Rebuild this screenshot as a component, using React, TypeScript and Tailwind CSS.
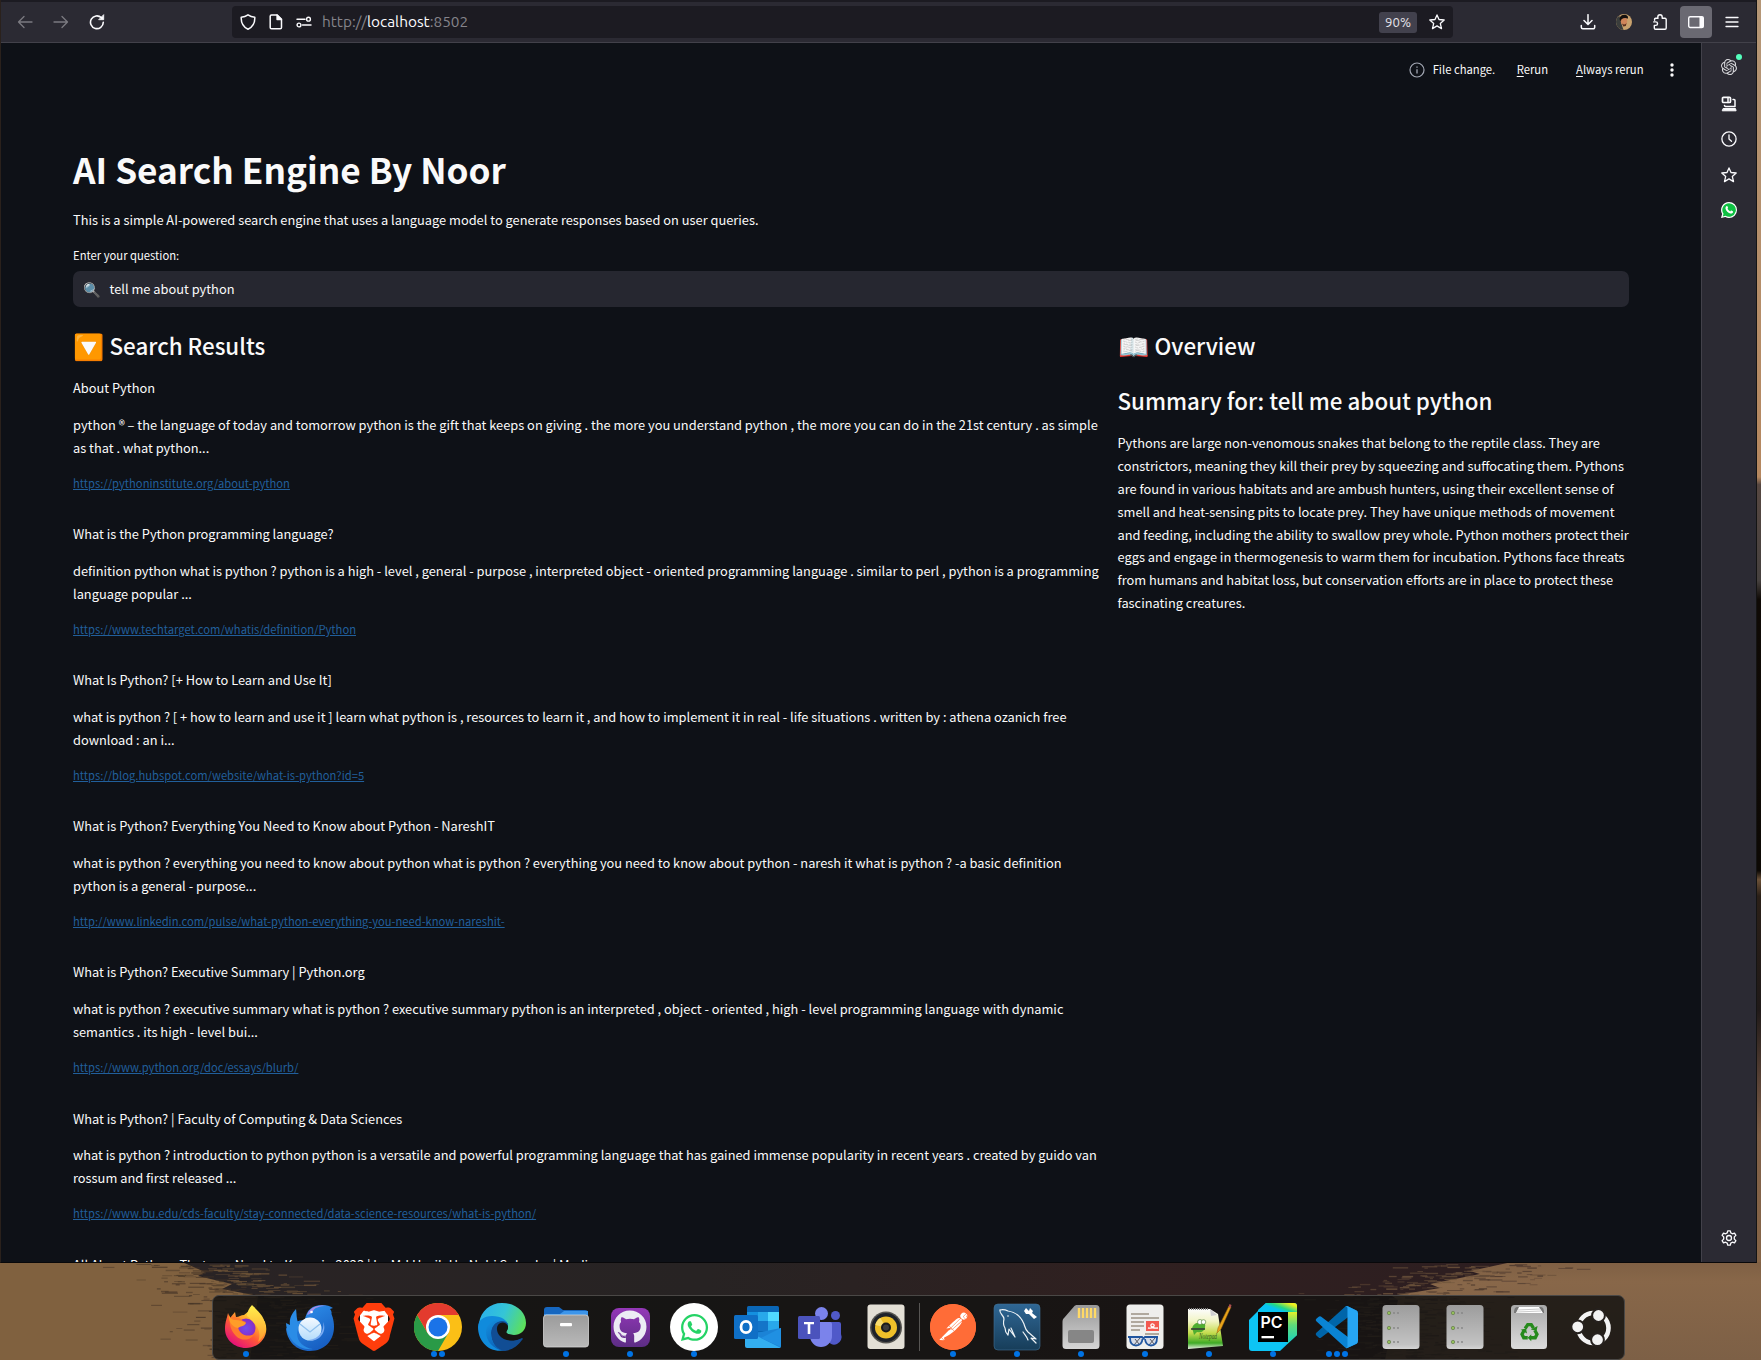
import React from "react";
import { FaGithub, FaWhatsapp } from "react-icons/fa";
import { SiBrave, SiOpenai, SiPostman } from "react-icons/si";

type Result = { title: string; body: [string, string]; url: string };

const results: Result[] = [
  {
    title: "About Python",
    body: [
      "python ® – the language of today and tomorrow python is the gift that keeps on giving . the more you understand python , the more you can do in the 21st century . as simple",
      "as that . what python...",
    ],
    url: "https://pythoninstitute.org/about-python",
  },
  {
    title: "What is the Python programming language?",
    body: [
      "definition python what is python ? python is a high - level , general - purpose , interpreted object - oriented programming language . similar to perl , python is a programming",
      "language popular ...",
    ],
    url: "https://www.techtarget.com/whatis/definition/Python",
  },
  {
    title: "What Is Python? [+ How to Learn and Use It]",
    body: [
      "what is python ? [ + how to learn and use it ] learn what python is , resources to learn it , and how to implement it in real - life situations . written by : athena ozanich free",
      "download : an i...",
    ],
    url: "https://blog.hubspot.com/website/what-is-python?id=5",
  },
  {
    title: "What is Python? Everything You Need to Know about Python - NareshIT",
    body: [
      "what is python ? everything you need to know about python what is python ? everything you need to know about python - naresh it what is python ? -a basic definition",
      "python is a general - purpose...",
    ],
    url: "http://www.linkedin.com/pulse/what-python-everything-you-need-know-nareshit-",
  },
  {
    title: "What is Python? Executive Summary | Python.org",
    body: [
      "what is python ? executive summary what is python ? executive summary python is an interpreted , object - oriented , high - level programming language with dynamic",
      "semantics . its high - level bui...",
    ],
    url: "https://www.python.org/doc/essays/blurb/",
  },
  {
    title: "What is Python? | Faculty of Computing & Data Sciences",
    body: [
      "what is python ? introduction to python python is a versatile and powerful programming language that has gained immense popularity in recent years . created by guido van",
      "rossum and first released ...",
    ],
    url: "https://www.bu.edu/cds-faculty/stay-connected/data-science-resources/what-is-python/",
  },
  {
    title: "All About Python: That you Need to Know in 2023 | by Md Hasib Un Nabi Soharba | Medium",
    body: ["", ""],
    url: "",
  },
];

const summary = [
  "Pythons are large non-venomous snakes that belong to the reptile class. They are",
  "constrictors, meaning they kill their prey by squeezing and suffocating them. Pythons",
  "are found in various habitats and are ambush hunters, using their excellent sense of",
  "smell and heat-sensing pits to locate prey. They have unique methods of movement",
  "and feeding, including the ability to swallow prey whole. Python mothers protect their",
  "eggs and engage in thermogenesis to warm them for incubation. Pythons face threats",
  "from humans and habitat loss, but conservation efforts are in place to protect these",
  "fascinating creatures.",
];

/* ---------- wallpaper ---------- */

function makeStreaks() {
  let seed = 11;
  const rnd = () => {
    seed = (seed * 16807) % 2147483647;
    return seed / 2147483647;
  };
  const out: { x: number; y: number; w: number; h: number; c: string; o: number }[] = [];
  for (let i = 0; i < 420; i++) {
    const y = 1264 + rnd() * 94;
    const edge = 192 + Math.min(y - 1264, 34) * 2.2;
    const d = (rnd() + rnd() + rnd() - 1.5) * 80;
    out.push({ x: edge + d, y, w: 3 + rnd() * 14, h: 0.6 + rnd() * 0.9, c: d < 0 ? "#463527" : "#725739", o: 0.4 + rnd() * 0.4 });
  }
  for (let i = 0; i < 420; i++) {
    const y = 1264 + rnd() * 94;
    const edge = 1500 - Math.min(y - 1264, 34) * 3;
    const d = (rnd() + rnd() + rnd() - 1.5) * 85;
    out.push({ x: edge + d, y, w: 3 + rnd() * 13, h: 0.6 + rnd() * 0.9, c: d > 0 ? "#4c382d" : "#70563d", o: 0.4 + rnd() * 0.4 });
  }
  return out;
}
const streaks = makeStreaks();

function Wallpaper() {
  return (
    <svg className="absolute inset-0" width="1761" height="1360" viewBox="0 0 1761 1360">
      <defs>
        <linearGradient id="wallMid" x1="0" x2="1">
          <stop offset="0" stopColor="#2a2325" />
          <stop offset="0.4" stopColor="#272323" />
          <stop offset="0.65" stopColor="#302020" />
          <stop offset="1" stopColor="#2a1c20" />
        </linearGradient>
        <linearGradient id="wallRight" x1="0" x2="0" y1="0" y2="1">
          <stop offset="0" stopColor="#b59777" />
          <stop offset="0.378" stopColor="#b5875f" />
          <stop offset="0.384" stopColor="#564741" />
          <stop offset="0.46" stopColor="#46413f" />
          <stop offset="0.475" stopColor="#0f0a06" />
          <stop offset="0.69" stopColor="#0d0905" />
          <stop offset="0.697" stopColor="#6b5138" />
          <stop offset="0.71" stopColor="#2b2018" />
          <stop offset="0.8" stopColor="#201a19" />
          <stop offset="0.86" stopColor="#5b4437" />
          <stop offset="0.9" stopColor="#7e5f47" />
          <stop offset="1" stopColor="#866547" />
        </linearGradient>
        <linearGradient id="wallBottom" x1="0" x2="0" y1="0" y2="1">
          <stop offset="0" stopColor="#7f6044" />
          <stop offset="0.2" stopColor="#886749" />
          <stop offset="1" stopColor="#7d6046" />
        </linearGradient>
      </defs>
      <rect width="1761" height="1360" fill="url(#wallMid)" />
      <path d="M0 1262H182L205 1272L198 1276L232 1284L222 1289L258 1296L250 1360H0z" fill="#80613f" />
      <path d="M1512 1262H1761V1360H1385L1398 1300L1392 1296L1440 1288L1430 1284L1480 1274L1470 1271z" fill="url(#wallBottom)" />
      {streaks.map((s, i) => (
        <rect key={i} x={s.x} y={s.y} width={s.w} height={s.h} fill={s.c} opacity={s.o} />
      ))}
      <rect x="1756" width="5" height="1262" fill="url(#wallRight)" />
    </svg>
  );
}

/* ---------- browser chrome icons ---------- */

function Icon({ children, className = "" }: { children: React.ReactNode; className?: string }) {
  return (
    <svg
      width="16"
      height="16"
      viewBox="0 0 16 16"
      fill="none"
      stroke="currentColor"
      strokeWidth="1.3"
      strokeLinecap="round"
      strokeLinejoin="round"
      className={"shrink-0 " + className}
    >
      {children}
    </svg>
  );
}

const Star = () => (
  <Icon>
    <path d="M8 .9l2 4.6 5.2.5-3.9 3.4 1.2 5.2L8 11.9l-4.500 2.700 1.200-5.200L.8 6l5.200-.5z" />
  </Icon>
);

const Gear = () => (
  <Icon>
    <circle cx="8" cy="8" r="2.5" />
    <path d="M6.7.8h2.6l.5 2.1 1.6.9 2.1-.7 1.4 2.3-1.6 1.5v2.2l1.6 1.5-1.4 2.3-2.1-.7-1.6.9-.5 2.1H6.7l-.5-2.1-1.6-.9-2.1.7-1.4-2.3 1.6-1.5V6.9L1.1 5.4l1.4-2.3 2.1.7 1.6-.9z" />
  </Icon>
);

const WhatsappBadge = () => (
  <svg width="16" height="16" viewBox="0 0 16 16" className="shrink-0">
    <path d="M8 0a8 8 0 0 1 0 16 8 8 0 0 1-3.7-.9L0 16l1.1-4A8 8 0 0 1 8 0z" fill="#fff" />
    <path d="M8 1.2a6.8 6.8 0 1 1-3.5 12.6L1.8 14.4l.7-2.6A6.8 6.8 0 0 1 8 1.2z" fill="#0fc043" />
    <path
      d="M5.4 4.2c.5-.4.9-.2 1.1.2l.6 1.3c.1.4-.5.8-.6 1.1.6 1.2 1.5 2 2.7 2.6.4-.1.8-.9 1.2-.8l1.4.7c.4.2.3.7.1 1.2-.4.9-1.6 1.3-2.7 1C6.9 10.8 5.3 9.2 4.6 7c-.3-1.1 0-2.2.8-2.8z"
      fill="#fff"
    />
  </svg>
);

function Toolbar() {
  return (
    <div className="flex h-[40px] shrink-0 items-center bg-[#2b2a33] text-[#fbfbfe]">
      <div className="flex w-[231px] items-center gap-5 pl-4">
        <Icon className="text-[#7b7a81]">
          <path d="M15 8H1.5M7 2.5L1.5 8 7 13.5" />
        </Icon>
        <Icon className="text-[#7b7a81]">
          <path d="M1 8h13.5M9 2.5L14.5 8 9 13.5" />
        </Icon>
        <Icon>
          <path d="M14.3 8.3A6.4 6.4 0 1 1 12.3 3.6" strokeWidth="1.6" />
          <path d="M14.7 1v4.7H10z" fill="currentColor" strokeWidth="0.8" />
        </Icon>
      </div>
      <div className="flex h-8 w-[1221px] items-center rounded-[4px] bg-[#1c1b22] pr-2 pl-2">
        <Icon>
          <path d="M8 .8c2 1.4 4.4 2.2 6.8 2.4.2 5-1.8 9.7-6.8 12C3 12.9 1 8.2 1.2 3.2 3.6 3 6 2.2 8 .8z" strokeWidth="1.5" />
        </Icon>
        <Icon className="ml-3">
          <path d="M3.5 1h5.7L13.5 5.3V13.5a1.3 1.3 0 0 1-1.3 1.3H3.5a1.3 1.3 0 0 1-1.3-1.3V2.3A1.3 1.3 0 0 1 3.5 1z" strokeWidth="1.5" />
          <path d="M9 1v4.5h4.5z" fill="currentColor" />
        </Icon>
        <Icon className="ml-3">
          <path d="M1 5.2h8M6.5 11H15" strokeWidth="1.5" />
          <circle cx="12.5" cy="5.2" r="1.9" strokeWidth="1.4" />
          <circle cx="3" cy="11" r="1.9" strokeWidth="1.4" />
        </Icon>
        <div className="ml-[10px] font-['Ubuntu','Noto_Sans',sans-serif] text-[15.4px] leading-8 whitespace-nowrap text-[#85848b]">
          http://<span className="text-[#fbfbfe]">localhost</span>:8502
        </div>
        <div className="mt-px ml-auto flex h-[21px] w-[38px] items-center justify-center rounded-[3px] bg-[#42414d] font-['Ubuntu','Noto_Sans',sans-serif] text-[13.2px] text-[#e4e3ea]">
          90%
        </div>
        <div className="ml-3">
          <Star />
        </div>
      </div>
      <div className="ml-auto flex items-center">
        <Icon>
          <path d="M8 .7v9.6M4 6.5l4 4 4-4M1.3 11.5v1.8a1.5 1.5 0 0 0 1.5 1.5h10.4a1.5 1.5 0 0 0 1.5-1.5v-1.8" strokeWidth="1.5" />
        </Icon>
        <svg width="16" height="16" viewBox="0 0 16 16" className="ml-5">
          <clipPath id="avatar">
            <circle cx="8" cy="8" r="8" />
          </clipPath>
          <g clipPath="url(#avatar)">
            <rect width="16" height="16" fill="#c9a26e" />
            <path d="M0 3l3.5-1 2 8 2 6H0z" fill="#3a3d3c" />
            <ellipse cx="8" cy="7" rx="3.2" ry="4.1" fill="#d0855a" />
            <path d="M3.5 5C4 1 7.5 0 10.5 1.2c1.6 1 1.8 2 1.2 3.5C10 3.5 7.5 3.8 5.5 5.2L4.7 7.5z" fill="#15100e" />
            <path d="M6 9.5c2 1.5 3.5 1 4.6-.5l-.8 3-2.5.5z" fill="#5b3020" />
          </g>
        </svg>
        <Icon className="ml-5">
          <path
            d="M5.8 4.3V3A2.2 2.2 0 0 1 10.2 3v1.3h2.8a1.2 1.2 0 0 1 1.2 1.2v8.5a1.2 1.2 0 0 1-1.2 1.2H3.5a1.2 1.2 0 0 1-1.2-1.2v-2.6h1.5a1.7 1.7 0 0 0 0-3.5H1.7"
            strokeWidth="1.4"
          />
          <path d="M5.8 4.3H3.6a1 1 0 0 0-1 1v.9" strokeWidth="1.4" />
        </Icon>
        <div className="ml-3 flex size-8 items-center justify-center rounded-[4px] bg-[#6a6972]">
          <Icon>
            <rect x="0.7" y="2.7" width="14.6" height="10.8" rx="1.5" strokeWidth="1.4" />
            <path d="M12 3h2.3a1 1 0 0 1 1 1v8.5a1 1 0 0 1-1 1H12z" fill="currentColor" strokeWidth="0.6" />
          </Icon>
        </div>
        <Icon className="mr-[16px] ml-3">
          <path d="M2 3.5h12M2 8h12M2 12.5h12" strokeWidth="1.3" />
        </Icon>
      </div>
    </div>
  );
}

function SideRail() {
  return (
    <div className="relative flex w-[55px] shrink-0 flex-col items-center border-l border-[#42414a] bg-[#2b2a33] pt-4 pr-px text-[#fbfbfe]">
      <SiOpenai size={16} className="text-[#d8d8dc]" />
      <span className="absolute top-[11px] left-[34px] size-[6px] rounded-full bg-[#54ffbd]" />
      <Icon className="mt-[21px]">
        <rect x="1.5" y="1.3" width="8" height="5.2" rx="1" strokeWidth="1.7" />
        <path d="M7 1.5v5M12 3.5h1a1 1 0 0 1 1 1v6H4.5a1.5 1.5 0 0 1-1-1" strokeWidth="1.5" />
        <path d="M2.5 12.5h12l.6 2.3H1.6z" fill="currentColor" strokeWidth="1" />
      </Icon>
      <Icon className="mt-[19px]">
        <circle cx="8" cy="8" r="7.1" />
        <path d="M8 3.8V8l2.5 2.3" />
      </Icon>
      <div className="mt-[20px]">
        <Star />
      </div>
      <div className="mt-[19px]">
        <WhatsappBadge />
      </div>
      <div className="mt-auto mb-[16px]">
        <Gear />
      </div>
    </div>
  );
}

/* ---------- page ---------- */

function SearchPage() {
  return (
    <main className="min-w-0 flex-1 overflow-hidden bg-[#0e1117] font-['Noto_Sans_CJK_SC',sans-serif] text-[12.83px] leading-[23.04px] whitespace-nowrap text-[#fafafa]">
      <div className="flex h-[54px] items-center justify-end pr-[27px] text-[11.25px]">
        <svg width="16" height="16" viewBox="0 0 16 16" fill="none" stroke="#a3a8b4" strokeWidth="1.2">
          <circle cx="8" cy="8" r="7" />
          <path d="M8 7.2V11.5M8 4.5v1.2" strokeWidth="1.3" />
        </svg>
        <span className="ml-2">File change.</span>
        <span className="ml-[21.5px]">
          <u className="underline-offset-2">R</u>erun
        </span>
        <span className="ml-[28px]">
          <u className="underline-offset-2">A</u>lways rerun
        </span>
        <svg width="4" height="14" viewBox="0 0 4 14" fill="#fafafa" className="ml-[26.5px]">
          <circle cx="2" cy="2" r="1.7" />
          <circle cx="2" cy="7" r="1.7" />
          <circle cx="2" cy="12" r="1.7" />
        </svg>
      </div>
      <div className="flex flex-col pr-[72px] pl-[72px]">
        <h1 className="mt-[47.5px] text-[35.2px] leading-[47.5px] font-bold">AI Search Engine By Noor</h1>
        <p className="mt-[16.4px]">
          This is a simple AI-powered search engine that uses a language model to generate responses based on user queries.
        </p>
        <p className="mt-[13px] text-[11.25px]">Enter your question:</p>
        <div className="mt-[4px] flex h-9 items-center rounded-[7px] bg-[#262730] pb-[2px] pl-[10px]">
          <span className="text-[14.4px]">🔍</span>
          <span className="ml-[8.5px]">tell me about python</span>
        </div>
        <div className="mt-[23px] flex">
          <section className="w-[1045px] shrink-0">
            <h2 className="flex text-[22.35px] leading-[30.2px] font-medium">
              <span className="w-[36.5px] text-[25.2px]">🔽</span>Search Results
            </h2>
            <div className="mt-[15.4px]">
              {results.map((r) => (
                <article key={r.title} className="h-[146.1px]">
                  <p>{r.title}</p>
                  <p className="mt-[13.8px]">
                    {r.body[0]}
                    <br />
                    {r.body[1]}
                  </p>
                  <a className="mt-[13px] block w-fit text-[11.21px] text-[#215f9b] underline">{r.url}</a>
                </article>
              ))}
            </div>
          </section>
          <section className="-ml-[0.5px]">
            <h2 className="flex text-[22.35px] leading-[30.2px] font-medium">
              <span className="w-[37px] text-[25.2px]">📖</span>Overview
            </h2>
            <h2 className="mt-[24px] text-[22.35px] leading-[30.2px] font-medium">Summary for: tell me about python</h2>
            <p className="mt-[17px] leading-[22.9px]">
              {summary.map((line) => (
                <React.Fragment key={line}>
                  {line}
                  <br />
                </React.Fragment>
              ))}
            </p>
          </section>
        </div>
      </div>
    </main>
  );
}

/* ---------- dock icons, each on a 48×48 grid ---------- */

function Svg48({ children }: { children: React.ReactNode }) {
  return (
    <svg width="48" height="48" viewBox="0 0 48 48">
      {children}
    </svg>
  );
}

const Firefox = () => (
  <Svg48>
    <defs>
      <linearGradient id="ff1" x1="0.85" y1="0.1" x2="0.25" y2="0.95">
        <stop offset="0" stopColor="#fff44f" />
        <stop offset="0.3" stopColor="#ffb52b" />
        <stop offset="0.6" stopColor="#ff5a36" />
        <stop offset="1" stopColor="#e4107a" />
      </linearGradient>
      <radialGradient id="ff2">
        <stop offset="0" stopColor="#6d4ff0" />
        <stop offset="1" stopColor="#8a2bc4" />
      </radialGradient>
      <linearGradient id="ff3" x1="0" y1="0" x2="0" y2="1">
        <stop offset="0" stopColor="#fff04d" />
        <stop offset="1" stopColor="#ff9a2e" />
      </linearGradient>
    </defs>
    <path d="M6 10l2 5 5-6 1 5c3 0 5-2 8-2l10-8c2 5 8 9 11 15 5 13-5 26-19 26C12 45 3 36 3 26 3 19 5 15 6 10z" fill="url(#ff1)" />
    <circle cx="24" cy="25" r="9.5" fill="url(#ff2)" />
    <path d="M30 2c4 4 8 8 10 11 6 10 3 21-4 26 3-8 1-14-4-19-4-4-5-6-7-7 0-4 2-8 5-11z" fill="url(#ff3)" />
    <path d="M8 15c4-2 9-1 13 3l3 1c-2 4-6 3-8 5 1 7 9 11 16 7-2 6-12 8-18 2-5-5-7-12-6-18z" fill="#ff7a2d" />
    <path d="M7 12c1 3 3 5 7 5 3 0 6 1 10 3-2 4-6 3-8 5-6-1-10-7-9-13z" fill="#ff9d28" />
  </Svg48>
);

const Thunderbird = () => (
  <Svg48>
    <defs>
      <linearGradient id="tb1" x1="0.2" y1="0" x2="0.8" y2="1">
        <stop offset="0" stopColor="#2f93ee" />
        <stop offset="1" stopColor="#1559bd" />
      </linearGradient>
      <linearGradient id="tb2" x1="0" y1="0" x2="0" y2="1">
        <stop offset="0" stopColor="#f4f9ff" />
        <stop offset="1" stopColor="#b3dcfb" />
      </linearGradient>
    </defs>
    <path d="M19 17C20 7 27 2 36 2c5 0 8 1 11 3l-3 1c1 1 2 3 1.5 5 2 5 2.5 9 2.5 13 0 13-9 24-24 24C10 48 1 38 0 25c1 1 3 1 4 0C6 20 12 17 19 17z" fill="url(#tb1)" />
    <path d="M21 12c2-7 10-11 20-9-8 0-13 2-14 5-1 2-3 3-6 4z" fill="#a58de8" />
    <path d="M0 20c1 16 12 28 27 26-9-1-16-7-16-16 0-3 1-5 3-8C10 18 11 12 10 6 5 11 3 17 4 22z" fill="#2a8ce6" />
    <circle cx="24" cy="26" r="11.5" fill="url(#tb2)" />
    <path d="M14 21l10 8 10-8" fill="none" stroke="#8fc0ee" strokeWidth="1.3" />
    <path d="M37 19c2 8-4 17-14 18 9 3 19-8 14-18z" fill="#79aaf2" />
    <circle cx="25.5" cy="9" r="1.3" fill="#fff" />
  </Svg48>
);

const Brave = () => (
  <div className="relative flex size-12 items-center justify-center text-[#ff3d0c]">
    <div className="absolute top-[7px] left-[10px] h-[32px] w-[28px] rounded-b-[14px] bg-white" />
    <SiBrave size={48} className="relative" />
  </div>
);

const Chrome = () => (
  <Svg48>
    <circle cx="24" cy="24" r="24" fill="#fbbf16" />
    <path d="M3.2 12A24 24 0 0 0 24 48L34.4 30 24 24 13.6 30z" fill="#2a9a47" />
    <path d="M3.2 12L13.6 30 24 12H44.8A24 24 0 0 0 3.2 12z" fill="#e33b2e" />
    <circle cx="24" cy="24" r="12" fill="#fff" />
    <circle cx="24" cy="24" r="9.5" fill="#1a73e8" />
  </Svg48>
);

const Edge = () => (
  <Svg48>
    <defs>
      <linearGradient id="ed1" x1="0" y1="0.3" x2="1" y2="0.6">
        <stop offset="0" stopColor="#2ab1ec" />
        <stop offset="0.5" stopColor="#35c5d6" />
        <stop offset="1" stopColor="#5de05a" />
      </linearGradient>
      <linearGradient id="ed2" x1="0" y1="0" x2="0.5" y2="1">
        <stop offset="0" stopColor="#1490df" />
        <stop offset="1" stopColor="#0b62b8" />
      </linearGradient>
    </defs>
    <path d="M1 20C3 8 12 0 24 0c14 0 24 9 24 20 0 8-6 12-12 12-5 0-8-2-8-3 1-2 2-3 2-6 0-5-6-8-13-7C9 16 3 18 1 20z" fill="url(#ed1)" />
    <path d="M0 24c0-7 6-11 14-11 9 0 16 4 16 10-4-6-11-5-14 1-5 10 0 19 12 23C12 51 0 39 0 24z" fill="#108bdc" />
    <path d="M13 30c0-7 5-12 11-12 3 0 5 1 6 4-2-1-6 0-6 5 0 7 7 12 15 10l5-2c1 0 1 1 0 2-4 6-10 10-17 11-8 0-14-8-14-18z" fill="#114d94" />
    <path d="M13 30c0-7 4-12 10-12-8-2-15 3-15 11 0 9 7 17 18 19-8-2-13-9-13-18z" fill="url(#ed2)" />
    <path d="M20 22c-2 3-1 7 1 10 4 5 11 7 18 4.500l4.500-1.800c.8-2-3-2.500-7-2.700-5 0-8-1-8.200-3 1-2 1.700-3 1.700-5.500-1.500-5-8-5-10-1.500z" fill="#171512" />
  </Svg48>
);

const Files = () => (
  <Svg48>
    <defs>
      <linearGradient id="fl" x1="0" y1="0" x2="0" y2="1">
        <stop offset="0" stopColor="#9b9b9b" />
        <stop offset="1" stopColor="#b9b9b9" />
      </linearGradient>
    </defs>
    <path d="M2 7a3 3 0 0 1 3-3h12l4 3h22a3 3 0 0 1 3 3v12H2z" fill="#1667c0" />
    <path d="M2 11h16l4-3h24v8H2z" fill="#3c95ea" />
    <rect x="1.5" y="12" width="45" height="32" rx="3" fill="url(#fl)" stroke="#d3d3d3" strokeWidth="0.8" />
    <rect x="18" y="20" width="12" height="3.2" rx="1" fill="#fff" />
  </Svg48>
);

const GithubDesktop = () => (
  <div className="flex size-12 items-center justify-center">
    <div className="flex size-[39px] items-center justify-center rounded-[8px] bg-linear-to-b from-[#9437b8] to-[#5c2d85]">
      <FaGithub size={34} className="text-[#ececf4]" />
    </div>
  </div>
);

const Whatsapp = () => (
  <div className="flex size-12 items-center justify-center rounded-full bg-white">
    <FaWhatsapp size={31} className="text-[#25d366]" />
  </div>
);

const Outlook = () => (
  <Svg48>
    <rect x="13" y="3" width="32" height="30" rx="1.5" fill="#0a66b5" />
    <path d="M13 9h11v9H13z" fill="#1490df" />
    <path d="M24 9h10v9H24z" fill="#28a8ea" />
    <path d="M34 9h11v9H34z" fill="#50d9ff" />
    <path d="M24 18h10v10H24z" fill="#1475c8" />
    <path d="M34 18h11v10H34z" fill="#28a8ea" />
    <path d="M13 30l14-1L47 25v18a2 2 0 0 1-2 2H13z" fill="#1b83d6" />
    <path d="M11 27l36 18H13a2 2 0 0 1-2-2z" fill="#33aef0" />
    <path d="M47 25v19L27 35z" fill="#2090e2" />
    <rect x="0" y="12" width="24" height="24" rx="1.5" fill="#0f6fc6" />
    <ellipse cx="12" cy="24" rx="5" ry="5.7" fill="none" stroke="#fff" strokeWidth="2.8" />
  </Svg48>
);

const Teams = () => (
  <Svg48>
    <circle cx="37.5" cy="12.5" r="4.5" fill="#5059c9" />
    <path d="M29 19h12a2 2 0 0 1 2 2v10a7 7 0 0 1-14 6z" fill="#5059c9" />
    <circle cx="23.5" cy="10.5" r="6.5" fill="#7b83eb" />
    <path d="M13 19h19a2 2 0 0 1 2 2v12a11 11 0 0 1-22 0V20z" fill="#7b83eb" />
    <rect x="0" y="13" width="22" height="23" rx="1.5" fill="#4b53bc" />
    <path d="M6 19h10v2.3h-3.7V31H9.7v-9.7H6z" fill="#fff" />
  </Svg48>
);

const Speaker = () => (
  <Svg48>
    <rect x="5.5" y="1.5" width="37" height="44.5" rx="3" fill="#e3dfd5" />
    <circle cx="24" cy="24.5" r="16" fill="#55544f" />
    <circle cx="24" cy="24.5" r="14.5" fill="#1e2229" />
    <circle cx="24" cy="24.5" r="11" fill="#efc02a" />
    <path d="M24 24.5L13.3 22a11 11 0 0 1 5-7z" fill="#f7dc70" />
    <circle cx="24" cy="24.5" r="5" fill="#1b1b1b" />
    <circle cx="24" cy="24.5" r="3" fill="#3c3c3c" />
  </Svg48>
);

const Postman = () => (
  <div className="flex size-12 items-center justify-center text-[#ff6c37]">
    <div className="flex size-[46px] items-center justify-center rounded-full bg-[#ff6c37]">
      <div className="flex size-[44px] items-center justify-center rounded-full bg-white">
        <SiPostman size={46} className="shrink-0" />
      </div>
    </div>
  </div>
);

const MysqlWorkbench = () => (
  <Svg48>
    <defs>
      <linearGradient id="my" x1="0" y1="0" x2="0" y2="1">
        <stop offset="0" stopColor="#2f6795" />
        <stop offset="1" stopColor="#173d59" />
      </linearGradient>
    </defs>
    <rect x="1" y="1" width="46" height="46" rx="4" fill="url(#my)" stroke="#3f7094" strokeWidth="0.6" />
    <g fill="none" stroke="#eef3f6" strokeWidth="1.2" strokeLinejoin="round" strokeLinecap="round">
      <path d="M7 7c3-1 6 0 8 1 8 1 13 6 16 13 1 3 1 5 4 8l8 7-5-1 5 5" />
      <path d="M7 7c-1 4 4 5 4 9-1 4-1 6 1 9 0 3 1 5 3 7l1-6 6 8-4-9" />
      <path d="M30 29c2 3 4 5 5 8" />
    </g>
    <circle cx="15" cy="13" r="0.8" fill="#fff" />
    <path d="M33 5l3 3 1-3 3 3-1 2 5 4-3 2-5-5-3 0-2-3z" fill="#fff" />
  </Svg48>
);

const SdCard = () => (
  <Svg48>
    <defs>
      <linearGradient id="sd" x1="0" y1="0" x2="0" y2="1">
        <stop offset="0" stopColor="#989898" />
        <stop offset="1" stopColor="#d6d6d6" />
      </linearGradient>
    </defs>
    <path d="M20 2h19a3.5 3.5 0 0 1 3.5 3.5v37a3.5 3.5 0 0 1-3.5 3.5H9a3.5 3.5 0 0 1-3.5-3.5V19c0-2 .5-3 2-4.5L17 3.5C18 2.5 18.5 2 20 2z" fill="url(#sd)" />
    <path d="M22 5v10M26 5v10M30 5v10M34 5v10M38 5v10" stroke="#ffd966" strokeWidth="2.4" />
    <rect x="11" y="27" width="26" height="13" rx="2" fill="#868686" />
  </Svg48>
);

const DocViewer = () => (
  <Svg48>
    <rect x="5.5" y="1.5" width="37" height="44.5" rx="3.5" fill="#eeeeec" />
    <path d="M10 11h18M10 15h28M10 19h13M10 23h13M10 27h9M24 31h14" stroke="#b0a99e" strokeWidth="1.8" />
    <rect x="25" y="18" width="13" height="10" fill="#f25a50" />
    <path d="M27 25c5 1 8-3 5-4-3-1-4 5 5 4" fill="none" stroke="#fff" strokeWidth="1.3" />
    <path d="M8.5 34h12l1.500 4c0 4-3 5-6 5-4 0-7-2-7-6zM25 34h11l-1 5c-1 3-3 4-5 4-4 0-6-3-6-6z" fill="#d5dbe8" />
    <path d="M13 42l6-7M28 42l6-7M14 36l4 5M29 36l4 5" stroke="#4a4a50" strokeWidth="0.9" />
    <path d="M7 34h14l1.500 1.500L24 34h13M9 35c0 5 2 7.500 6 7.500 4 0 6-2 6.500-6.500M24 36c.5 4.500 2 6.500 6 6.500s6-2.500 6-7.500" fill="none" stroke="#20559f" strokeWidth="1.8" />
  </Svg48>
);

const NotepadPP = () => (
  <Svg48>
    <defs>
      <linearGradient id="np" x1="0" y1="0" x2="0" y2="1">
        <stop offset="0" stopColor="#fcfcfc" />
        <stop offset="0.3" stopColor="#f2f5c6" />
        <stop offset="0.6" stopColor="#c5dc4e" />
        <stop offset="0.85" stopColor="#3fab26" />
        <stop offset="1" stopColor="#e8f0e4" />
      </linearGradient>
    </defs>
    <path d="M3 6h22l8 5 5 32L3 46z" fill="url(#np)" />
    <path d="M4 6h20" stroke="#888" strokeWidth="2" strokeDasharray="1 1" />
    <path d="M25 6l1 7 6-1z" fill="#cfcfcf" />
    <path d="M7 26c1-6 6-7 9-5 3-2 5 0 4 3 0 4-4 6-8 5l-3 3-1-4z" fill="#4fae30" />
    <circle cx="15" cy="19" r="2.5" fill="#fff" stroke="#4b7d33" strokeWidth="0.6" />
    <circle cx="18.5" cy="19" r="2.3" fill="#fff" stroke="#4b7d33" strokeWidth="0.6" />
    <path d="M6 26h14" stroke="#333" strokeWidth="1.5" />
    <text x="14" y="35.5" fontSize="8" fontStyle="italic" fontFamily="Liberation Serif, serif" fill="#33591d" textLength="18" lengthAdjust="spacingAndGlyphs">
      Notepad
    </text>
    <path d="M32 30l1-5L44 3l2 1-10 22z" fill="#e9a31a" stroke="#98640d" strokeWidth="0.5" />
    <path d="M43.5 4l1-3 2 1-.8 3z" fill="#ad5050" />
  </Svg48>
);

const PyCharm = () => (
  <Svg48>
    <defs>
      <linearGradient id="pc" x1="0.35" y1="0.45" x2="0.95" y2="0.05">
        <stop offset="0" stopColor="#07c3f2" />
        <stop offset="0.3" stopColor="#21d789" />
        <stop offset="0.85" stopColor="#f2f01d" />
      </linearGradient>
      <linearGradient id="pc2" x1="0" y1="1" x2="0" y2="0">
        <stop offset="0" stopColor="#14cfc0" />
        <stop offset="0.6" stopColor="#5fdc7a" />
        <stop offset="1" stopColor="#e4ee28" />
      </linearGradient>
    </defs>
    <path d="M17 0h28a3 3 0 0 1 3 3v29L31 48H3a3 3 0 0 1-3-3V17z" fill="#0dc4f5" />
    <path d="M17 0h28a3 3 0 0 1 3 3v7H9V7z" fill="url(#pc)" />
    <path d="M38 9h10v23L38 41z" fill="url(#pc2)" />
    <rect x="9" y="9" width="30" height="30" fill="#000" />
    <path d="M12.5 33h12.5v2.3H12.5z" fill="#fff" />
    <text x="11.5" y="24.5" fontSize="15.5" fontWeight="600" fontFamily="Inter, sans-serif" fill="#fff" textLength="22" lengthAdjust="spacingAndGlyphs">
      PC
    </text>
  </Svg48>
);

const VsCode = () => (
  <Svg48>
    <g transform="translate(2.8 3) scale(0.422)">
      <path d="M96.46 10.8L75.86.87a6.23 6.23 0 0 0-7.1 1.21L1.3 63.58a4.17 4.17 0 0 0 0 6.16l5.51 5.01a4.17 4.17 0 0 0 5.32.24L93.36 13.37c2.73-2.07 6.64-.12 6.64 3.3v-.24a6.25 6.25 0 0 0-3.54-5.63z" fill="#0065a9" />
      <path d="M96.46 89.2l-20.6 9.92a6.23 6.23 0 0 1-7.1-1.21L1.3 36.41a4.17 4.17 0 0 1 0-6.16l5.51-5.01a4.17 4.17 0 0 1 5.32-.24l81.23 61.62c2.73 2.07 6.64.12 6.64-3.3v.24a6.25 6.25 0 0 1-3.54 5.64z" fill="#0a84d4" />
      <path d="M75.86 99.13a6.23 6.23 0 0 1-7.1-1.21c2.31 2.3 6.25.67 6.25-2.59V4.67c0-3.26-3.94-4.89-6.24-2.59a6.23 6.23 0 0 1 7.1-1.21l20.6 9.91A6.25 6.25 0 0 1 100 16.41v67.17a6.25 6.25 0 0 1-3.54 5.63z" fill="#26a5f3" />
    </g>
  </Svg48>
);

const Disk = () => (
  <Svg48>
    <defs>
      <linearGradient id="dk" x1="0" y1="0" x2="0" y2="1">
        <stop offset="0" stopColor="#9c9c9c" />
        <stop offset="0.9" stopColor="#c3c3c3" />
        <stop offset="1" stopColor="#d5d5d5" />
      </linearGradient>
    </defs>
    <rect x="5.5" y="2" width="37" height="44" rx="3.5" fill="url(#dk)" />
    {[10, 25, 39].map((y) => (
      <g key={y}>
        <circle cx="12" cy={y} r="1.7" fill="#93c05a" stroke="#66784f" strokeWidth="0.7" />
        <circle cx="17" cy={y} r="0.9" fill="#848484" />
        <circle cx="21" cy={y} r="0.9" fill="#848484" />
      </g>
    ))}
  </Svg48>
);

const Trash = () => (
  <Svg48>
    <defs>
      <linearGradient id="tr" x1="0" y1="0" x2="0" y2="1">
        <stop offset="0" stopColor="#a9a9a9" />
        <stop offset="1" stopColor="#dcdcdc" />
      </linearGradient>
    </defs>
    <rect x="6" y="2" width="36" height="44" rx="3.5" fill="url(#tr)" />
    <path d="M9 10c0-4 1-6 3-6h24c2 0 3 2 3 6z" fill="#777" />
    <path d="M11 10l3-6h20l4 6z" fill="#fff" />
    <path d="M13 7l22-1M12 9l24-1" stroke="#aaa" strokeWidth="0.6" />
    <g transform="translate(24.5 29.500) scale(0.88) translate(-24.5 -31)" fill="none" stroke="#268a1c" strokeWidth="3.8">
      <path d="M19.5 26.5l3-4.500h4l2.500 4" />
      <path d="M30.5 28.5l2.500 4.500-2 4h-5" />
      <path d="M22.5 37h-4.500l-2-4 2.500-4.500" />
      <path d="M26 27.5l6.500 1.500 1.200-5.500zM26.5 33v8l-4-4zM14.5 28l6-1.500 1.200 5.500z" fill="#268a1c" stroke="none" />
    </g>
  </Svg48>
);

const Ubuntu = () => (
  <Svg48>
    <circle cx="24.5" cy="25" r="15" fill="none" stroke="#f3f3f3" strokeWidth="4.6" />
    <g fill="#f3f3f3" stroke="#26211e" strokeWidth="2">
      <circle cx="29.5" cy="12.5" r="6.4" />
      <circle cx="8.7" cy="23.8" r="6.4" />
      <circle cx="28.5" cy="36.7" r="6.4" />
    </g>
  </Svg48>
);

type DockItem = { name: string; icon: () => React.ReactElement; dots: number };

const dockLeft: DockItem[] = [
  { name: "firefox", icon: Firefox, dots: 1 },
  { name: "thunderbird", icon: Thunderbird, dots: 0 },
  { name: "brave", icon: Brave, dots: 0 },
  { name: "chrome", icon: Chrome, dots: 2 },
  { name: "edge", icon: Edge, dots: 0 },
  { name: "files", icon: Files, dots: 1 },
  { name: "github", icon: GithubDesktop, dots: 1 },
  { name: "whatsapp", icon: Whatsapp, dots: 1 },
  { name: "outlook", icon: Outlook, dots: 0 },
  { name: "teams", icon: Teams, dots: 0 },
  { name: "speaker", icon: Speaker, dots: 0 },
];

const dockRight: DockItem[] = [
  { name: "postman", icon: Postman, dots: 1 },
  { name: "mysql", icon: MysqlWorkbench, dots: 1 },
  { name: "sdcard", icon: SdCard, dots: 1 },
  { name: "docviewer", icon: DocViewer, dots: 1 },
  { name: "notepad", icon: NotepadPP, dots: 1 },
  { name: "pycharm", icon: PyCharm, dots: 1 },
  { name: "vscode", icon: VsCode, dots: 3 },
  { name: "disk-a", icon: Disk, dots: 0 },
  { name: "disk-b", icon: Disk, dots: 0 },
  { name: "trash", icon: Trash, dots: 0 },
  { name: "ubuntu", icon: Ubuntu, dots: 0 },
];

function DockButton({ item }: { item: DockItem }) {
  const Glyph = item.icon;
  return (
    <div className="flex w-16 shrink-0 flex-col items-center">
      <Glyph />
      <div className="flex gap-[2px]">
        {Array.from({ length: item.dots }, (_, i) => (
          <span key={i} className="size-[6px] rounded-full bg-[#0073e5]" />
        ))}
      </div>
    </div>
  );
}

function Dock() {
  return (
    <div className="mt-[32px] ml-[212px] flex h-[66px] w-[1413px] rounded-[7px] border border-[#4a4846] bg-[#141312]/85 pt-[7px] pl-px">
      {dockLeft.map((d) => (
        <DockButton key={d.name} item={d} />
      ))}
      <div className="mr-[1px] ml-[1px] h-12 w-px shrink-0 bg-[#575553]" />
      {dockRight.map((d) => (
        <DockButton key={d.name} item={d} />
      ))}
    </div>
  );
}

export default function App() {
  return (
    <div className="relative h-[1360px] w-[1761px] overflow-hidden bg-[#2a2325]">
      <Wallpaper />
      <div className="relative flex h-full flex-col">
        <div className="flex h-[1263px] w-[1757px] shrink-0 flex-col border-r border-b border-l border-r-[#141414] border-b-[#08080a] border-l-[#2a211c]">
          <div className="h-[2px] shrink-0 bg-[#1c1b22]" />
          <Toolbar />
          <div className="h-px shrink-0 bg-[#42414a]" />
          <div className="flex min-h-0 flex-1">
            <SearchPage />
            <SideRail />
          </div>
        </div>
        <Dock />
      </div>
    </div>
  );
}
